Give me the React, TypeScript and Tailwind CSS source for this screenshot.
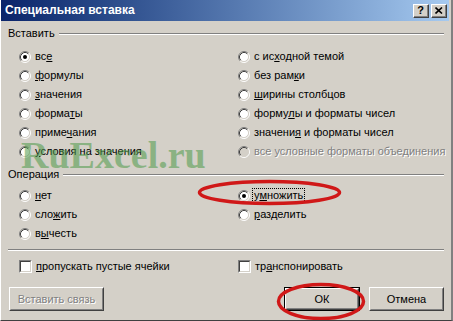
import React from 'react';

const FONT = "font-['Liberation_Sans','Noto_Sans',sans-serif]";

function Hotkey({ text, u }: { text: string; u?: number }) {
  if (u === undefined) return <span>{text}</span>;
  return (
    <span>
      {text.slice(0, u)}
      <span className="underline underline-offset-[1px]">{text[u]}</span>
      {text.slice(u + 1)}
    </span>
  );
}

function Radio({ checked, disabled }: { checked?: boolean; disabled?: boolean }) {
  return (
    <svg width="12" height="12" viewBox="0 0 12 12" className="shrink-0">
      <circle cx="6" cy="6" r="4.5" fill={disabled ? '#d4d0c8' : '#ffffff'} />
      <path d="M2.11 9.89 A5.5 5.5 0 0 1 9.89 2.11" fill="none" stroke="#808080" strokeWidth="1" />
      <path d="M9.89 2.11 A5.5 5.5 0 0 1 2.11 9.89" fill="none" stroke="#ffffff" strokeWidth="1" />
      <path d="M2.82 9.18 A4.5 4.5 0 0 1 9.18 2.82" fill="none" stroke="#404040" strokeWidth="1" />
      <path d="M9.18 2.82 A4.5 4.5 0 0 1 2.82 9.18" fill="none" stroke="#d4d0c8" strokeWidth="1" />
      {checked && <circle cx="6" cy="6" r="2" fill="#000000" />}
    </svg>
  );
}

function Option({
  label,
  u,
  checked,
  disabled,
  focused,
}: {
  label: string;
  u?: number;
  checked?: boolean;
  disabled?: boolean;
  focused?: boolean;
}) {
  return (
    <div className="flex items-center gap-[4px] whitespace-nowrap">
      <Radio checked={checked} disabled={disabled} />
      <span
        className={
          (disabled ? 'text-[#808080] [text-shadow:1px_1px_0_#ffffff] ' : 'text-black ') +
          (focused ? 'outline outline-1 outline-dotted outline-black px-[1px] -ml-[1px]' : '')
        }
      >
        <Hotkey text={label} u={u} />
      </span>
    </div>
  );
}

function Check({ label, u }: { label: string; u?: number }) {
  return (
    <div className="flex items-center gap-[4px] whitespace-nowrap">
      <div className="w-[13px] h-[13px] shrink-0 border border-t-[#808080] border-l-[#808080] border-b-white border-r-white">
        <div className="w-full h-full bg-white border border-t-[#404040] border-l-[#404040] border-b-[#d4d0c8] border-r-[#d4d0c8]" />
      </div>
      <span className="text-black">
        <Hotkey text={label} u={u} />
      </span>
    </div>
  );
}

function Legend({ text }: { text: string }) {
  return (
    <div className="flex items-center gap-[4px] h-[13px]">
      <span className="text-black">{text}</span>
      <div className="flex-1 h-[2px] border-t border-t-[#808080] border-b border-b-white" />
    </div>
  );
}

function Etched() {
  return <div className="h-[2px] border-t border-t-[#808080] border-b border-b-white" />;
}

function Button({
  label,
  width,
  disabled,
  isDefault,
}: {
  label: string;
  width: string;
  disabled?: boolean;
  isDefault?: boolean;
}) {
  const inner = (
    <div className="h-full border border-t-white border-l-white border-b-[#404040] border-r-[#404040]">
      <div className="h-full flex items-center justify-center border border-t-[#d4d0c8] border-l-[#d4d0c8] border-b-[#808080] border-r-[#808080]">
        <span className={disabled ? 'text-[#808080] [text-shadow:1px_1px_0_#ffffff]' : 'text-black'}>
          {label}
        </span>
      </div>
    </div>
  );
  return (
    <div className={width + ' h-[24px] ' + (isDefault ? 'border border-black' : '')}>{inner}</div>
  );
}

function TitleButton({ children }: { children: React.ReactNode }) {
  return (
    <div className="w-[16px] h-[14px] bg-[#d4d0c8] border border-t-white border-l-white border-b-[#404040] border-r-[#404040]">
      <div className="w-full h-full flex items-center justify-center border-b border-r border-[#808080] text-black text-[11px] font-bold leading-none">
        {children}
      </div>
    </div>
  );
}

export default function App() {
  return (
    <div
      className={
        FONT +
        ' relative w-[453px] h-[321px] overflow-hidden bg-[#d4d0c8] text-[11px] leading-[13px] flex flex-col border-l border-l-white border-r-2 border-r-[#808080] border-b border-b-[#404040]'
      }
    >
      {/* Title bar */}
      <div className="h-[21px] shrink-0 mr-[2px] flex items-center pl-[4px] pr-[2px] bg-linear-to-r from-[#0a246a] to-[#a6caf0]">
        <span className="flex-1 text-white font-bold text-[12px]">Специальная вставка</span>
        <div className="flex gap-[2px]">
          <TitleButton>?</TitleButton>
          <TitleButton>
            <svg width="8" height="7" viewBox="0 0 8 7">
              <path d="M0.5 0.5 L7 6.5 M7 0.5 L0.5 6.5" stroke="#000" strokeWidth="1.6" />
            </svg>
          </TitleButton>
        </div>
      </div>

      <div className="px-[7px] flex flex-col">
        <div className="mt-[6px]">
          <Legend text="Вставить" />
        </div>
        <div className="mt-[7px] pl-[11px] grid grid-cols-[219px_1fr] grid-rows-[repeat(6,19px)] grid-flow-col">
          <Option label="все" u={2} checked />
          <Option label="формулы" u={0} />
          <Option label="значения" u={0} />
          <Option label="форматы" u={5} />
          <Option label="примечания" u={5} />
          <Option label="условия на значения" u={0} />
          <Option label="с исходной темой" u={4} />
          <Option label="без рамки" u={7} />
          <Option label="ширины столбцов" u={0} />
          <Option label="формулы и форматы чисел" u={5} />
          <Option label="значения и форматы чисел" u={7} />
          <Option label="все условные форматы объединения" disabled />
        </div>

        <div className="mt-[7px]">
          <Legend text="Операция" />
        </div>
        <div className="mt-[5px] pl-[11px] grid grid-cols-[219px_1fr] grid-rows-[repeat(3,19px)] grid-flow-col">
          <Option label="нет" u={0} />
          <Option label="сложить" u={3} />
          <Option label="вычесть" u={1} />
          <Option label="умножить" u={1} checked focused />
          <Option label="разделить" u={0} />
        </div>

        <div className="mt-[6px]">
          <Etched />
        </div>

        <div className="mt-[9px] pl-[11px] grid grid-cols-[219px_1fr]">
          <Check label="пропускать пустые ячейки" u={0} />
          <Check label="транспонировать" u={2} />
        </div>

        <div className="mt-[14px] pl-[1px] flex items-center">
          <Button label="Вставить связь" width="w-[95px]" disabled />
          <div className="flex-1" />
          <Button label="ОК" width="w-[76px]" isDefault />
          <div className="w-[9px]" />
          <Button label="Отмена" width="w-[75px]" />
        </div>
      </div>

      {/* watermark */}
      <div className="absolute left-[20px] top-[136px] font-['Liberation_Serif',serif] font-bold text-[38px] leading-none text-[#4f9a4a] opacity-[0.55] pointer-events-none">
        RuExcel.ru
      </div>

      {/* red annotation ellipses */}
      <svg className="absolute inset-0 pointer-events-none" width="453" height="321" viewBox="0 0 453 321">
        <ellipse cx="268.5" cy="192.5" rx="70" ry="11" fill="none" stroke="#d01818" strokeWidth="3.5" />
        <ellipse cx="320" cy="301.5" rx="42.5" ry="17" fill="none" stroke="#d01818" strokeWidth="3.5" />
      </svg>
    </div>
  );
}
